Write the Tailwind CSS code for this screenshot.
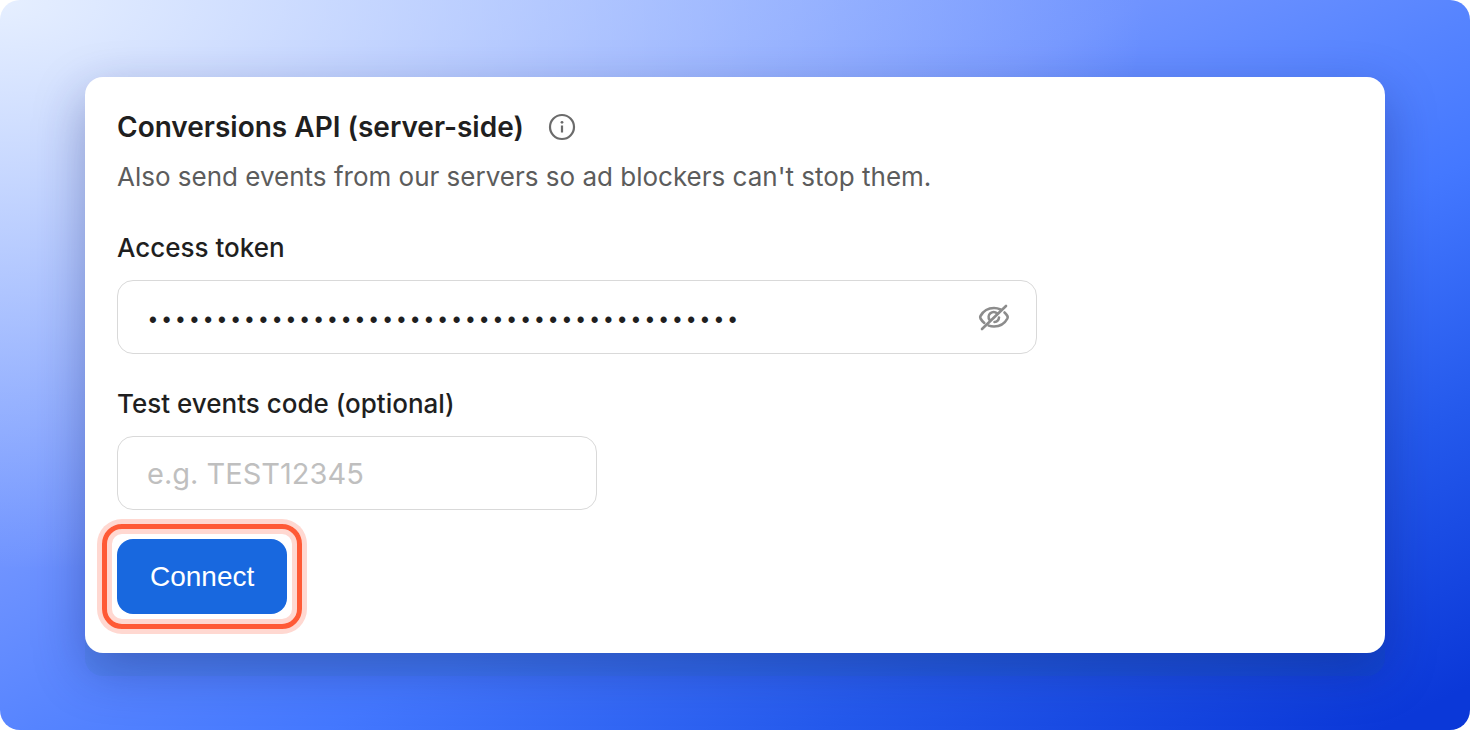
<!DOCTYPE html>
<html lang="en">
<head>
  <meta charset="UTF-8" />
  <meta name="viewport" content="width=device-width, initial-scale=1.0" />
  <title>Conversions API</title>
  <script src="https://cdn.jsdelivr.net/npm/@tailwindcss/browser@4"></script>
</head>
<body class="bg-white font-['Inter',sans-serif] text-[#1f1f1f]">
  <main class="min-h-screen flex items-center rounded-[20px] px-[85px] py-[77px] bg-[radial-gradient(ellipse_78%_78%_at_0%_0%,#e6efff,#e6efff00),linear-gradient(to_bottom_right,#88a8ff,#6f93ff_39%,#5684ff_51%,#4478ff_61%,#2459ec_78%,#0b38d8_97%)]">
    <section class="w-full rounded-[18px] bg-white px-[32px] pt-[32px] pb-[39px] shadow-[0_23px_0_rgba(20,110,120,0.08),0_18px_50px_rgba(20,30,110,0.36)]">
      <div class="flex items-center gap-[24px]">
        <h1 class="text-[28px] leading-[36px] font-semibold">Conversions API (server-side)</h1>
        <button type="button" aria-label="About the Conversions API" class="text-[#6b6b6b]">
          <svg class="size-[28px]" viewBox="0 0 28 28" fill="none" stroke="currentColor" stroke-width="2.200">
            <circle cx="14" cy="14" r="12" />
            <path d="M14 12.500v7" />
            <circle cx="14" cy="9.300" r="1.400" fill="currentColor" stroke="none" />
          </svg>
        </button>
      </div>
      <p class="mt-[16px] text-[26px] leading-[32px] text-[#5c5c5c]">Also send events from our servers so ad blockers can't stop them.</p>

      <form class="mt-[38px] flex flex-col items-start">
        <label for="accessToken" class="text-[26px] leading-[34px] font-medium">Access token</label>
        <div class="mt-[15px] w-full max-w-[920px] flex items-center rounded-[16px] border border-[#d9d9d9] pr-[26px]">
          <input
            type="password"
            id="accessToken"
            value="EAABsbCS1iHgBAKZCq0vXn3tY8uW5rL2pM7dF9kJ4hQ"
            class="min-w-0 flex-1 h-[72px] px-[28px] pt-[10px] text-[23px] font-['Liberation_Mono',monospace] outline-none"
          />
          <button type="button" aria-label="Show token" class="text-[#8c8c8c]">
            <svg class="size-[32px]" viewBox="0 0 32 32" fill="none" stroke="currentColor" stroke-width="2.600" stroke-linecap="round">
              <path d="M28 5 4 28" />
              <path d="M22.500 8.500C20.500 7.500 18.300 7 16 7 10 7 5 10.500 2.500 15c-.5.900-.5 1.500 0 2.500.9 1.600 2.200 3.100 3.800 4.400" />
              <path d="M26.500 11.500c1.100 1 2.100 2.200 2.900 3.500.5.900.5 1.500 0 2.500C27 22 22 25.500 16 25.500c-1.900 0-3.700-.3-5.300-.9" />
              <path d="M19 12.300a5 5 0 0 0-7.500 6.500" />
              <path d="M21 16.500a5 5 0 0 1-4.500 4.500" />
            </svg>
          </button>
        </div>

        <label for="testCode" class="mt-[33px] text-[26px] leading-[34px] font-medium">Test events code (optional)</label>
        <input
          type="text"
          id="testCode"
          placeholder="e.g. TEST12345"
          class="mt-[15px] w-full max-w-[480px] h-[74px] rounded-[16px] border border-[#d9d9d9] px-[29px] text-[29px] placeholder:text-[#bfbfbf] outline-none"
        />

        <!-- highlight ring sits around the button without taking space -->
        <button
          type="submit"
          class="relative mt-[29px] h-[75px] px-[33px] rounded-[16px] bg-[#1868df] text-white text-[28px] font-['Liberation_Sans',sans-serif] after:absolute after:-inset-[15px] after:rounded-[20px] after:border-[5px] after:border-[#ff5a36] after:shadow-[0_0_0_5px_#ffd8d1,inset_0_0_0_5px_#ffd8d1]"
        >
          Connect
        </button>
      </form>
    </section>
  </main>
</body>
</html>
